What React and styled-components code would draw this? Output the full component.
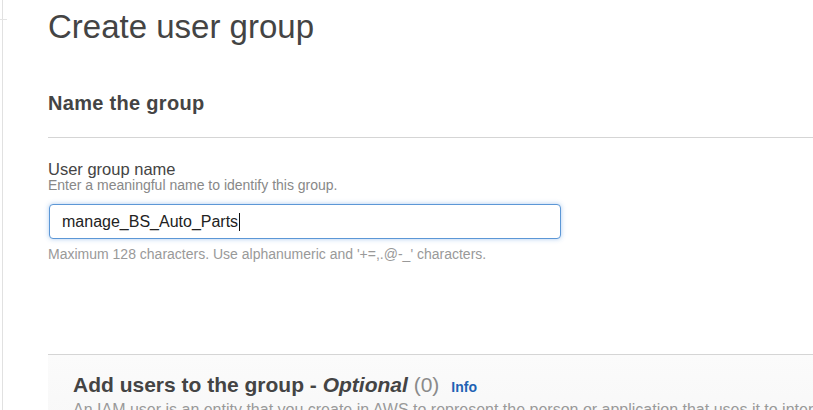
import React from "react";
import styled, { createGlobalStyle } from "styled-components";

const GlobalStyle = createGlobalStyle`
  html, body {
    margin: 0;
    padding: 0;
    background: #ffffff;
    overflow: hidden;
  }
  body {
    font-family: "Liberation Sans", Arial, sans-serif;
    color: #444;
  }
`;

const Page = styled.div`
  display: flex;
  min-height: 410px;
`;

// thin edge of the collapsed navigation on the left
const SideEdge = styled.div`
  position: relative;
  width: 2px;
  flex: 0 0 2px;
  border-right: 1px solid #e1e1e1;

  &::after {
    content: "";
    position: absolute;
    top: 19px;
    left: 0;
    width: 7px;
    height: 1px;
    background: #e4e4e4;
  }
`;

const Main = styled.main`
  flex: 1;
  min-width: 0;
  padding: 7px 0 0 45px;
  overflow: hidden;
`;

const Title = styled.h1`
  margin: 0;
  font-size: 33px;
  line-height: 40px;
  font-weight: 400;
  color: #444;
`;

const SectionTitle = styled.h2`
  margin: 44px 0 0;
  padding-bottom: 22px;
  border-bottom: 1px solid #d5d5d5;
  font-size: 20px;
  line-height: 24px;
  font-weight: 700;
  letter-spacing: 0.3px;
  color: #444;
`;

const Field = styled.div`
  display: flex;
  flex-direction: column;
  padding-top: 22px;
`;

const Label = styled.label`
  font-size: 16.5px;
  line-height: 18px;
  color: #444;
`;

const Description = styled.div`
  font-size: 14px;
  line-height: 15px;
  color: ${(p) => (p.light ? "#999" : "#888")};
  margin-top: ${(p) => p.top || 0}px;
  white-space: nowrap;
`;

const InputBox = styled.div`
  display: flex;
  align-items: center;
  box-sizing: border-box;
  width: 512px;
  height: 35px;
  margin: 11px 0 0 1px;
  padding: 0 12px;
  border: 1px solid #5c97d6;
  border-radius: 4px;
  box-shadow: 0 0 5px rgba(70, 140, 220, 0.45);
  font-size: 16px;
  color: #222;
  background: #fff;
`;

const Caret = styled.span`
  display: inline-block;
  width: 1px;
  height: 18px;
  margin-left: 1px;
  background: #111;
`;

const Panel = styled.section`
  margin-top: 92px;
  margin-right: -30px;
  padding: 17px 25px 20px 25px;
  border-top: 1px solid #d5d5d5;
  background: linear-gradient(to bottom, #fbfbfb, #f7f7f7);
`;

const PanelTitle = styled.h2`
  margin: 0;
  font-size: 21px;
  line-height: 26px;
  font-weight: 700;
  color: #444;
  white-space: nowrap;
`;

const Count = styled.span`
  font-weight: 400;
  color: #8a8a8a;
`;

const InfoLink = styled.a`
  margin-left: 12px;
  font-size: 14px;
  font-weight: 700;
  color: #1f62b4;
  text-decoration: none;
`;

const PanelText = styled.p`
  margin: 0;
  font-size: 16px;
  line-height: 20px;
  color: #999;
  white-space: nowrap;
`;

export default function App() {
  return (
    <Page>
      <GlobalStyle />
      <SideEdge />
      <Main>
        <Title>Create user group</Title>
        <SectionTitle>Name the group</SectionTitle>
        <Field>
          <Label>User group name</Label>
          <Description>Enter a meaningful name to identify this group.</Description>
          <InputBox>
            manage_BS_Auto_Parts
            <Caret />
          </InputBox>
          <Description light top={8}>
            Maximum 128 characters. Use alphanumeric and '+=,.@-_' characters.
          </Description>
        </Field>
        <Panel>
          <PanelTitle>
            Add users to the group - <i>Optional</i> <Count>(0)</Count>
            <InfoLink href="#">Info</InfoLink>
          </PanelTitle>
          <PanelText>
            An IAM user is an entity that you create in AWS to represent the
            person or application that uses it to interact with AWS.
          </PanelText>
        </Panel>
      </Main>
    </Page>
  );
}
